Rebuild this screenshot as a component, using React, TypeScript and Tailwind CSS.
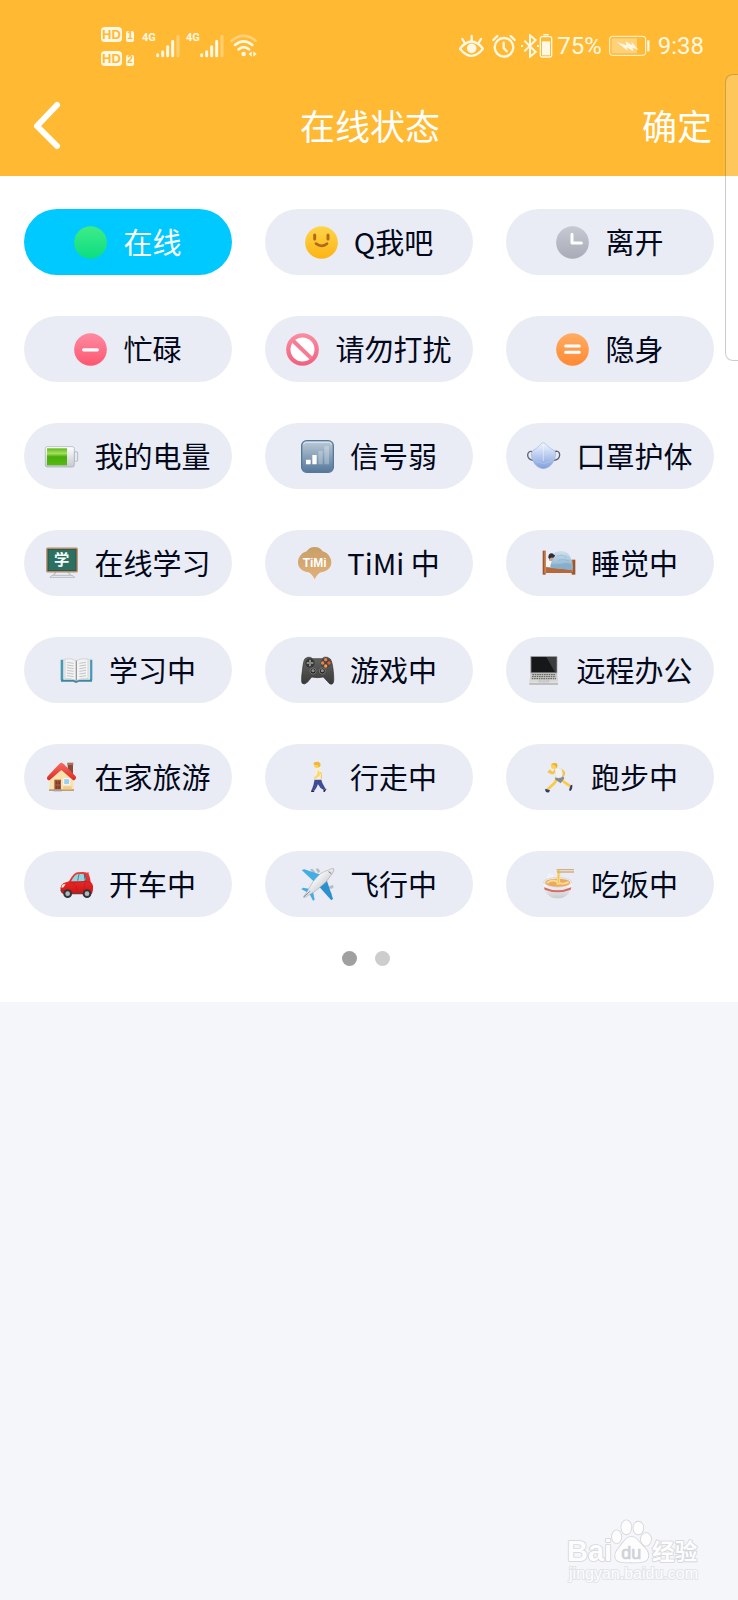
import { useState } from "react";
import type { ReactNode } from "react";

interface Status {
  id: string;
  label: string;
  icon: ReactNode;
}

interface GradientProps {
  id: string;
  from: string;
  to: string;
}

const Fade = ({ id, from, to }: GradientProps) => (
  <linearGradient id={id} x1="0" y1="0" x2="0" y2="1">
    <stop offset="0" stopColor={from} />
    <stop offset="1" stopColor={to} />
  </linearGradient>
);

const Glyph = ({ children }: { children: ReactNode }) => (
  <svg viewBox="0 0 99 99" className="size-[33px] shrink-0 overflow-visible" fill="none" aria-hidden="true">
    {children}
  </svg>
);

const statuses: Status[] = [
  {
    id: "online",
    label: "在线",
    icon: (
      <Glyph>
        <Fade id="online" from="#3eec86" to="#0cdd83" />
        <circle cx="49.5" cy="49.5" r="49" fill="url(#online)" />
      </Glyph>
    ),
  },
  {
    id: "qme",
    label: "Q我吧",
    icon: (
      <Glyph>
        <Fade id="smile" from="#ffd54a" to="#fcb414" />
        <circle cx="49.5" cy="49.5" r="49" fill="url(#smile)" />
        <path d="M29 27v12M69 27v12" stroke="#b06a1c" strokeWidth="9" strokeLinecap="round" />
        <path d="M33 53q17 13 33 0" stroke="#b06a1c" strokeWidth="8" strokeLinecap="round" />
      </Glyph>
    ),
  },
  {
    id: "away",
    label: "离开",
    icon: (
      <Glyph>
        <Fade id="away" from="#c6c8d2" to="#a9abb8" />
        <circle cx="49.5" cy="49.5" r="49" fill="url(#away)" />
        <path d="M48 25v26h28" stroke="#fff" strokeWidth="9" strokeLinecap="round" strokeLinejoin="round" />
      </Glyph>
    ),
  },
  {
    id: "busy",
    label: "忙碌",
    icon: (
      <Glyph>
        <Fade id="busy" from="#fd8ba1" to="#fe566f" />
        <circle cx="49.5" cy="49.5" r="49" fill="url(#busy)" />
        <path d="M29 50.500h41" stroke="#fff" strokeWidth="10" strokeLinecap="round" />
      </Glyph>
    ),
  },
  {
    id: "dnd",
    label: "请勿打扰",
    icon: (
      <Glyph>
        <Fade id="dnd" from="#fb8da2" to="#f0607f" />
        <circle cx="49.5" cy="49.5" r="49" fill="url(#dnd)" />
        <circle cx="49.5" cy="49.5" r="36" fill="#fff" />
        <path d="M22 24l54 52" stroke="#f67b93" strokeWidth="12" />
      </Glyph>
    ),
  },
  {
    id: "invisible",
    label: "隐身",
    icon: (
      <Glyph>
        <Fade id="invisible" from="#ffac63" to="#ff8a32" />
        <circle cx="49.5" cy="49.5" r="49" fill="url(#invisible)" />
        <path d="M29 39h41M29 58h41" stroke="#fff" strokeWidth="9" strokeLinecap="round" />
      </Glyph>
    ),
  },
  {
    id: "battery",
    label: "我的电量",
    icon: (
      <Glyph>
        <linearGradient id="cell" x1="0" y1="0" x2="0" y2="1">
          <stop offset="0" stopColor="#5fb91c" />
          <stop offset=".3" stopColor="#a5e05c" />
          <stop offset=".5" stopColor="#48ad0a" />
          <stop offset="1" stopColor="#57b815" />
        </linearGradient>
        <Fade id="shell" from="#ffffff" to="#c3c9cf" />
        <rect x="87" y="35" width="11" height="29" rx="4" fill="#e6eaee" stroke="#9da4ab" strokeWidth="2" />
        <rect x="1" y="20" width="87" height="61" rx="6" fill="url(#shell)" stroke="#a3aab0" strokeWidth="2" />
        <rect x="6" y="25" width="60" height="51" fill="url(#cell)" />
      </Glyph>
    ),
  },
  {
    id: "weak-signal",
    label: "信号弱",
    icon: (
      <Glyph>
        <Fade id="signal" from="#bccbd8" to="#54779a" />
        <rect x="2" y="2" width="95" height="95" rx="15" fill="url(#signal)" stroke="#58789a" strokeWidth="4" />
        <path d="M8 14q0-7 8-7h67q8 0 8 7" stroke="#dce7ef" strokeWidth="3" />
        <path d="M15 59h14v14H15zM34 45h13v28H34z" fill="#fff" />
        <path d="M52 33h13v40H52zM70 19h14v54H70z" fill="#fff" fillOpacity=".28" />
      </Glyph>
    ),
  },
  {
    id: "mask",
    label: "口罩护体",
    icon: (
      <Glyph>
        <Fade id="mask" from="#f1f7ff" to="#809fdc" />
        <path d="M20 36Q3 30 2 45q0 15 19 16M79 36q18-7 19 8 0 15-19 17" stroke="#59616e" strokeWidth="4" />
        <path
          d="M49 8q4 0 12 9 10 10 20 14 6 3 5 14-1 14-10 25-10 15-27 16-17-1-27-16-9-11-9-25 0-11 5-14 10-4 19-14 8-9 12-9z"
          fill="url(#mask)"
          stroke="#90a7d6"
          strokeWidth="1.500"
        />
        <path d="M49 13v50" stroke="#f5f8ff" strokeWidth="3" opacity=".5" />
        <path d="M16 54q12 14 33 17 22-3 34-17" stroke="#b8cdf2" strokeWidth="2" opacity=".7" />
      </Glyph>
    ),
  },
  {
    id: "online-study",
    label: "在线学习",
    icon: (
      <Glyph>
        <path d="M33 74l-8 12M69 74l8 12" stroke="#bdc0c4" strokeWidth="4" />
        <path d="M15 91q2-6 11-6h51q9 0 12 6z" fill="#eceef2" stroke="#aeb3ba" strokeWidth="2.500" />
        <rect x="6" y="4" width="90" height="70" rx="2" fill="#2d7061" stroke="#b98a68" strokeWidth="5" />
        <rect x="9" y="7" width="84" height="64" stroke="#1d5044" strokeWidth="2" />
        <text
          x="50"
          y="55"
          textAnchor="middle"
          fontSize="46"
          fontWeight="700"
          fill="#f4fffa"
          fontFamily="'Noto Sans CJK SC', sans-serif"
        >
          学
        </text>
      </Glyph>
    ),
  },
  {
    id: "timi",
    label: "TiMi 中",
    icon: (
      <Glyph>
        <Fade id="timi" from="#c89f68" to="#e2b078" />
        <path
          d="M50 0c12 0 20 6 24 13 15 4 26 18 26 34 0 15-14 26-28 28-10 2-16 10-22 22-6-12-12-20-22-22C14 73 0 62 0 47c0-16 11-30 26-34C30 6 38 0 50 0z"
          fill="url(#timi)"
        />
        <text
          x="50"
          y="61"
          textAnchor="middle"
          fontSize="36"
          fontWeight="700"
          fill="#fff"
          fontFamily="'Liberation Sans', Arial, sans-serif"
        >
          TiMi
        </text>
      </Glyph>
    ),
  },
  {
    id: "sleeping",
    label: "睡觉中",
    icon: (
      <Glyph>
        <Fade id="quilt" from="#cfe2ee" to="#7fa9c8" />
        <path d="M12 60l78 8v10H12z" fill="#b5693a" />
        <path d="M2 11h9v72H2z" fill="#9c5630" />
        <path d="M7 13h5v66H7z" fill="#cf8552" />
        <path d="M89 38h11v45H89z" fill="#9c5630" />
        <path d="M88 40h5v36h-5z" fill="#c67a48" />
        <path d="M12 42q10-7 22-3l-2 19H12z" fill="#f3f7fb" />
        <path d="M19 31q0-13 12-12l9 6-4 13H23z" fill="#2c2f38" />
        <path d="M22 36q4-6 11-4l-1 10H22z" fill="#d5a17c" />
        <path d="M26 55q2-19 14-29-3-4-9-6 14-10 34-7 14 2 22 22l6 26-2 8-65-6z" fill="url(#quilt)" />
        <path d="M26 52q27 1 45-4 12-2 21 10v10l-66-8z" fill="#86afce" />
        <path d="M45 27q17-6 30 4M48 40q13-5 33 1" stroke="#7299b8" strokeWidth="2" opacity=".5" />
      </Glyph>
    ),
  },
  {
    id: "studying",
    label: "学习中",
    icon: (
      <Glyph>
        <path d="M2 17h9v62H2zM89 17h8v62h-8z" fill="#4698b6" />
        <path d="M3 77h93v6H56l-5 3h-6l-4-3H3z" fill="#3e879f" />
        <path d="M10 16h7v60h-7zM83 16h7v60h-7z" fill="#eeeff0" stroke="#c4c6c9" />
        <path d="M15 15q21-3 34 5 13-8 35-5v59q-22-3-35 6-13-9-34-6z" fill="#f4f3f3" stroke="#c6c7c9" strokeWidth="2" />
        <path d="M49 20v60" stroke="#989b9e" strokeWidth="4" />
        <path
          d="M21 25l20 3M21 33l20 3M21 41l20 3M21 49l20 3M21 57l20 3M21 65l20 3M58 28l20-3M58 36l20-3M58 44l20-3M58 52l20-3M58 60l20-3M58 68l20-3"
          stroke="#c3c5ca"
          strokeWidth="3"
        />
      </Glyph>
    ),
  },
  {
    id: "gaming",
    label: "游戏中",
    icon: (
      <Glyph>
        <Fade id="pad" from="#656662" to="#393a38" />
        <path
          d="M12 14l8-4q9-2 15 4h28q7-7 16-4l9 5q6 9 9 38 3 30-1 35-7 7-16-5L67 69q-18 4-35 0L19 85q-10 9-16 2-3-10 1-36Q7 20 12 14z"
          fill="url(#pad)"
          stroke="#30312f"
          strokeWidth="2"
        />
        <circle cx="27" cy="27" r="14" fill="#353635" />
        <circle cx="74" cy="27" r="15" fill="#454641" />
        <path d="M27 17v20M17 27h20" stroke="#888986" strokeWidth="6" />
        <circle cx="74" cy="17" r="5" fill="#f6803e" />
        <circle cx="84" cy="27" r="5" fill="#ee5b2b" />
        <circle cx="74" cy="36" r="5" fill="#f89a4d" />
        <circle cx="65" cy="27" r="5" fill="#ef8247" />
        <circle cx="36" cy="51" r="9" fill="#1e1f1e" stroke="#929390" strokeWidth="2" />
        <circle cx="64" cy="51" r="9" fill="#1e1f1e" stroke="#929390" strokeWidth="2" />
        <circle cx="36" cy="50" r="5" fill="#8b8c89" />
        <circle cx="64" cy="50" r="5" fill="#8b8c89" />
      </Glyph>
    ),
  },
  {
    id: "remote-work",
    label: "远程办公",
    icon: (
      <Glyph>
        <Fade id="deck" from="#c1c1bf" to="#e5e5e4" />
        <rect x="10" y="6" width="81" height="53" rx="3" fill="#9b9b9a" />
        <path d="M13 9h75v46H13z" fill="#161718" />
        <path d="M58 9h30v46h-4z" fill="#3a3c3d" />
        <path d="M11 58h79l4 29q0 5-5 5H11q-5 0-5-5z" fill="url(#deck)" />
        <path d="M16 62h69M15 68h71M14 74h73" stroke="#6b6c6b" strokeWidth="4" strokeDasharray="5 2" />
        <path d="M37 78h27l2 6H35z" fill="#d4d4d3" stroke="#a1a19f" />
        <path d="M7 90h86" stroke="#9c9c9b" strokeWidth="3" />
      </Glyph>
    ),
  },
  {
    id: "home-travel",
    label: "在家旅游",
    icon: (
      <Glyph>
        <Fade id="roof" from="#f66b61" to="#dd2927" />
        <path d="M68 7h16v33H68z" fill="#8b4938" />
        <path d="M67 5h18v7H67z" fill="#ac725c" />
        <path d="M13 50l36-35 37 35v37H13z" fill="#fae2ac" />
        <path d="M13 50l36-31 37 31" stroke="#dcb276" strokeWidth="3" />
        <path d="M49 5q4 0 8 5l34 35q5 5-1 11-5 4-9-1L49 27 17 55q-5 5-9 1-5-5 1-11l33-35q4-5 7-5z" fill="url(#roof)" />
        <path d="M28 56h20v32H28z" fill="#a4593d" />
        <path d="M32 61h5v9h-5zM40 61h5v9h-5zM32 74h5v10h-5zM40 74h5v10h-5z" fill="#7e3b26" />
        <rect x="56" y="53" width="18" height="18" fill="#9dcff0" stroke="#f5fafd" strokeWidth="3" />
        <path d="M12 85h37v5H12zM49 85h38v5H49z" fill="#c59b76" />
        <path d="M25 86h26v5H25z" fill="#a5a29d" />
        <path d="M55 76h25v9H55z" fill="#f0cc88" />
      </Glyph>
    ),
  },
  {
    id: "walking",
    label: "行走中",
    icon: (
      <Glyph>
        <path d="M41 55l19-2q3 13 9 22l5 9-6 3q-12-6-17-17-4 11-11 19l-8-2q6-13 9-32z" fill="#3e4b96" />
        <path d="M32 86l8 4-1 3h-9zM69 86l8-3-6 10q-6 0-4-4z" fill="#25273d" />
        <path d="M43 24q9-6 16 0 4 8 3 19l-1 13H41z" fill="#f3efdc" />
        <path d="M51 27q8 7 5 17l-14 10-4-3 10-10z" fill="#ffd65f" />
        <circle cx="48" cy="12" r="9" fill="#ffd250" />
        <path d="M37 9q2-8 14-7 10 3 7 13l-5 4-3-8q-8 2-13-2z" fill="#efb637" />
        <path d="M59 34q4 9 2 18l-3 4" stroke="#f3c64e" strokeWidth="3" strokeLinecap="round" />
      </Glyph>
    ),
  },
  {
    id: "running",
    label: "跑步中",
    icon: (
      <Glyph>
        <path d="M45 50q-4 16-14 22L16 86M57 50q3 10 12 15l17 11" stroke="#fbca43" strokeWidth="8" strokeLinecap="round" strokeLinejoin="round" />
        <path d="M10 83l14 5-3 6q-13 2-11-11zM86 73l5-2q1 13-6 19-6-1-3-6z" fill="#2b3b6b" />
        <path d="M40 26q-5 15-16 8M58 27q12 7 6 16" stroke="#f9c23d" strokeWidth="7" strokeLinecap="round" />
        <path d="M42 45l19-2 6 9-11 15-17-12z" fill="#84888f" />
        <path d="M38 23q11-6 21 2 3 8 2 22-12 8-22 0 3-11-1-24z" fill="#f2f2f0" stroke="#d6d8da" strokeWidth="1.500" />
        <circle cx="36" cy="15" r="9" fill="#ffd150" />
        <path d="M28 11q4-8 16-4 6 7-1 14l-5-10z" fill="#efb12b" />
        <path d="M20 33l4-4 6 7" stroke="#fac540" strokeWidth="6" strokeLinecap="round" />
      </Glyph>
    ),
  },
  {
    id: "driving",
    label: "开车中",
    icon: (
      <Glyph>
        <Fade id="car" from="#f23b38" to="#d21114" />
        <path d="M84 12v16" stroke="#e0474a" strokeWidth="3" />
        <path d="M27 40q14-26 25-27 24-3 32 3 5 5 8 26 6 5 7 12 1 13-3 23l-10 2H12Q3 76 2 68q-2-8 2-16 3-7 23-12z" fill="url(#car)" />
        <path d="M34 38q11-19 20-20h17l4 19-5 3H34z" fill="#8ed5e1" />
        <path d="M57 18l-4 20M74 18l6 17-4 3-3-20z" stroke="#4b5359" strokeWidth="2" fill="#6fc0d0" />
        <path d="M29 45l46-5 18 4M41 46q9 9 10 22M76 43l-6 29" stroke="#b8191b" strokeWidth="2" />
        <path d="M6 50l11-3-6 11-7 1z" fill="#fff2ce" />
        <path d="M2 68h12M36 76h32" stroke="#5c4346" strokeWidth="4" />
        <circle cx="23" cy="77" r="13" fill="#303438" />
        <circle cx="23" cy="77" r="7" fill="#b2b7ba" />
        <circle cx="81" cy="77" r="13" fill="#303438" />
        <circle cx="81" cy="77" r="7" fill="#b2b7ba" />
      </Glyph>
    ),
  },
  {
    id: "flying",
    label: "飞行中",
    icon: (
      <Glyph>
        <linearGradient id="hull" x1="0" y1="0" x2="1" y2="1">
          <stop offset=".3" stopColor="#ffffff" />
          <stop offset=".8" stopColor="#b9bdc3" />
        </linearGradient>
        <path d="M27 4l7-2 10 11-7 6zM44 3l7-2 7 9-7 6zM85 55l11-4 2 7-7 5-8-3zM79 73l11-1 3 7-7 5-8-4z" fill="#b8bdc2" />
        <path d="M2 6l8-2 54 18-20 24z" fill="#42aee5" />
        <path d="M77 36l19 56-5 5-39-44z" fill="#2b90d0" />
        <path d="M1 64l5-5 27 5-9 11zM36 70l5 25-5 3-12-23z" fill="#42aee5" />
        <path d="M83 6q10-7 15-4 3 5-5 16L75 42Q45 69 29 78l-19 11-2-3 12-18Q33 40 57 18 71 9 83 6z" fill="url(#hull)" stroke="#979ca3" strokeWidth="1.500" />
        <path d="M83 11l8 6" stroke="#6c7883" strokeWidth="3" />
        <path d="M8 87l20-18" stroke="#858a90" strokeWidth="3" />
      </Glyph>
    ),
  },
  {
    id: "eating",
    label: "吃饭中",
    icon: (
      <Glyph>
        <Fade id="bowl" from="#fafafa" to="#c8cccd" />
        <path d="M20 38q-5-9 1-13 4-4 2-8M31 32q-4-6 2-12" stroke="#fff" strokeWidth="4" opacity=".7" />
        <ellipse cx="47" cy="43" rx="43" ry="15" fill="#e9e7e2" stroke="#d8d6d0" strokeWidth="2" />
        <ellipse cx="47" cy="44" rx="37" ry="12" fill="#eba860" />
        <path d="M15 45q17-13 31-3t34 0" stroke="#ffd992" strokeWidth="6" />
        <path d="M42 4h13v14l-1 30q-5 6-11 1l3-31z" fill="#f7d97e" />
        <path d="M50 8l-1 38" stroke="#e6bb5c" strokeWidth="2" />
        <path d="M45 3h51v4H45zM45 10h51v4H45z" fill="#d3ae80" />
        <path d="M4 46q15 14 43 14t43-14q0 26-19 38-7 7-24 7t-24-7Q4 72 4 46z" fill="url(#bowl)" />
        <path d="M6 58q40 18 82 0l-2 7q-39 16-78 0z" fill="#d96a6c" />
      </Glyph>
    ),
  },
];

const SignalBars = () => (
  <div className="flex">
    <span className="-mt-1.5 w-[14px] font-['Roboto',sans-serif] text-[11px] leading-5 font-bold">4G</span>
    <svg viewBox="0 0 72 72" className="size-6" fill="none" stroke="currentColor" strokeWidth="9" strokeLinecap="round" aria-hidden="true">
      <path d="M5 65v-3M20 65V53M35 65V38M50 65V22" />
      <path d="M66 65V7" opacity=".35" />
    </svg>
  </div>
);

const SimBadge = ({ slot }: { slot: number }) => (
  <div className="flex items-end gap-1">
    <span className="flex h-[15px] w-[21px] items-center justify-center rounded-sm bg-[#fff8e4] font-['Liberation_Sans',Arial,sans-serif] text-[13px] leading-none font-bold text-[#ffb933]">
      HD
    </span>
    <span className="flex h-[11px] w-2 items-center justify-center rounded-xs bg-[#fff8e4] font-['Liberation_Sans',Arial,sans-serif] text-[10px] leading-none font-bold text-[#ffb933]">
      {slot}
    </span>
  </div>
);

const StatusBar = () => (
  <div className="flex h-20 items-center justify-between pt-3 pr-[34px] pl-[101px] text-[#fff8e4]">
    <div className="flex items-center gap-[6px]">
      <div className="mr-[2px] flex flex-col gap-[9px]">
        <SimBadge slot={1} />
        <SimBadge slot={2} />
      </div>
      <SignalBars />
      <SignalBars />
      <svg viewBox="0 0 84 72" className="h-6 w-7" fill="none" stroke="currentColor" strokeWidth="8" strokeLinecap="round" aria-hidden="true">
        <path d="M5 20q36-29 72 0" opacity=".4" />
        <path d="M15 33q26-22 52 0M26 46q15-13 31 0" />
        <circle cx="41" cy="60" r="7" fill="currentColor" stroke="none" />
        <path d="M65 52v16l-9-8zM70 52v16l10-8z" fill="currentColor" stroke="none" />
      </svg>
    </div>

    <div className="flex items-center font-['Roboto',sans-serif] text-[24px] leading-8">
      <svg viewBox="0 0 75 72" className="mr-2 h-6 w-[25px]" fill="none" stroke="currentColor" strokeWidth="7" strokeLinecap="round" aria-hidden="true">
        <path d="M3 44q34-43 69 0-35 43-69 0z" />
        <path d="M38 6v13M10 15l7 12M66 15l-7 12" />
        <circle cx="38" cy="43" r="11" fill="currentColor" />
      </svg>
      <svg viewBox="0 0 72 72" className="mr-[5px] size-6" fill="none" stroke="currentColor" strokeWidth="7" strokeLinecap="round" aria-hidden="true">
        <circle cx="36" cy="40" r="28" />
        <path d="M35 26v16l9 10M4 18L16 6M68 18L56 6" />
      </svg>
      <svg viewBox="0 0 54 72" className="h-6 w-[18px]" fill="none" stroke="currentColor" strokeWidth="6" aria-hidden="true">
        <path d="M10 20l34 34-17 14V4l17 14-34 34" />
        <path d="M0 36h6M48 36h6" />
      </svg>
      <svg viewBox="0 0 42 72" className="mr-1 h-6 w-[14px]" fill="none" stroke="currentColor" strokeWidth="4" aria-hidden="true">
        <rect x="4" y="8" width="34" height="61" rx="5" />
        <path d="M13 2h16" strokeWidth="5" />
        <path d="M9 22h24v42H9z" fill="currentColor" stroke="none" />
      </svg>
      <span>75%</span>
      <svg viewBox="0 0 126 66" className="mx-[7px] h-[22px] w-[42px]" fill="none" stroke="currentColor" strokeWidth="3" aria-hidden="true">
        <rect x="2" y="4" width="108" height="57" rx="8" />
        <path d="M8 10h76v45H8z" fill="currentColor" fillOpacity=".4" stroke="none" />
        <path d="M22 20l30 11-2-12 20 12-3-11 22 25-18-7 2 11-20-12 3 10z" fill="currentColor" stroke="none" />
        <path d="M118 16v33" strokeWidth="7" />
      </svg>
      <span>9:38</span>
    </div>
  </div>
);

const Watermark = () => (
  <footer className="mt-auto flex flex-col items-end pr-10 pb-4 font-['Liberation_Sans',Arial,sans-serif]">
    <svg
      viewBox="51 54 396 156"
      className="-mb-[6px] h-[52px] w-[132px] overflow-visible"
      fill="#fdfdfe"
      stroke="#d3d5d9"
      strokeWidth="5"
      aria-label="Baidu 经验"
      role="img"
    >
      <g fontWeight="700" paintOrder="stroke" strokeLinejoin="round">
        <text x="54" y="184" fontSize="87">
          Bai
        </text>
        <ellipse cx="203" cy="110" rx="14" ry="19" />
        <ellipse cx="232" cy="82" rx="15" ry="21" />
        <ellipse cx="268" cy="84" rx="15" ry="19" />
        <ellipse cx="291" cy="118" rx="15" ry="19" />
        <path d="M247 111q14 0 24 16l20 21q13 18 2 32-9 9-46 7-37 2-44-7-10-14 2-30l18-23q10-16 24-16z" />
        <text x="247" y="176" textAnchor="middle" fontSize="54" fontWeight="400" fill="#cfd2d7" stroke="#cfd2d7" strokeWidth="2">
          du
        </text>
        <text x="309" y="180" fontSize="68" fontFamily="'Noto Sans CJK SC', sans-serif">
          经验
        </text>
      </g>
    </svg>
    <span className="text-base leading-5 text-[#fdfdfe] [-webkit-text-stroke:2px_#e2e4e8] [paint-order:stroke]">
      jingyan.baidu.com
    </span>
  </footer>
);

const App = () => {
  const [selected, setSelected] = useState("online");

  return (
    <div className="relative flex min-h-screen flex-col overflow-hidden bg-[#f4f6fa] font-['Noto_Sans_CJK_SC',sans-serif]">
      <header className="bg-[#ffb933]">
        <StatusBar />
        <nav className="grid h-24 grid-cols-[1fr_auto_1fr] items-center pr-[26px] pb-1.5 pl-7 text-[35px] leading-10 text-white">
          <button type="button" aria-label="返回" className="justify-self-start">
            <svg viewBox="0 0 36 52" className="h-[52px] w-9" fill="none" stroke="currentColor" strokeWidth="6" strokeLinecap="round" strokeLinejoin="round" aria-hidden="true">
              <path d="M29 6L9 27l20 20" />
            </svg>
          </button>
          <h1>在线状态</h1>
          <button type="button" className="justify-self-end">
            确定
          </button>
        </nav>
      </header>

      <main className="bg-white px-6 pt-[33px] pb-9">
        <div className="grid grid-cols-3 gap-x-[33px] gap-y-[41px]">
          {statuses.map((status) => (
            <button
              key={status.id}
              type="button"
              aria-pressed={status.id === selected}
              onClick={() => setSelected(status.id)}
              className={`flex h-[66px] items-center justify-center gap-4 rounded-full text-[29px] leading-10 whitespace-nowrap ${
                status.id === selected ? "bg-[#00c9ff] text-white" : "bg-[#e9ecf4] text-[#03081a]"
              }`}
            >
              {status.icon}
              <span className="pb-[3px]">{status.label}</span>
            </button>
          ))}
        </div>
        <div className="mt-[34px] flex justify-center gap-[18px] pr-1.5">
          <button type="button" aria-label="第1页" className="size-[15px] rounded-full bg-[#a0a0a0]" />
          <button type="button" aria-label="第2页" className="size-[15px] rounded-full bg-[#cdcdcd]" />
        </div>
      </main>

      <Watermark />

      {/* edge panel handle */}
      <div className="absolute top-[74px] right-0 h-[287px] w-[13px] rounded-l-lg border border-r-0 border-black/20 bg-white/20" />
    </div>
  );
};

export default App;
